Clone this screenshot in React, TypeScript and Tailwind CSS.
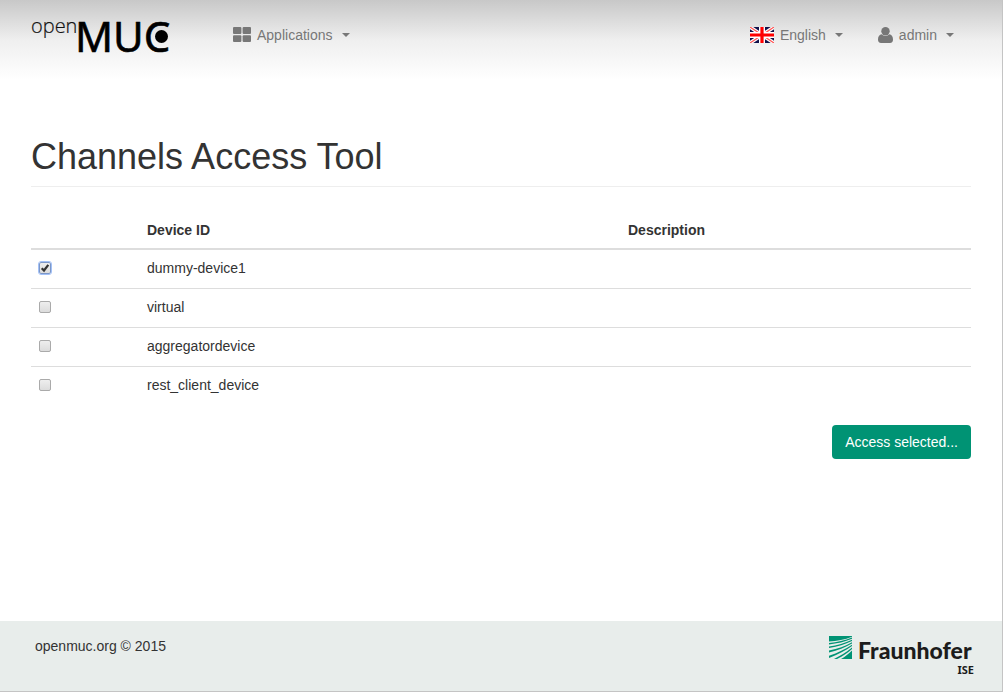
import { useState } from "react";
import type { ReactNode } from "react";

function Caret() {
  return <span className="ml-[9px] inline-block border-x-4 border-t-4 border-x-transparent border-t-[#777]" aria-hidden="true" />;
}

function NavButton({ icon, children }: { icon: ReactNode; children: ReactNode }) {
  return (
    <button type="button" className="flex h-5 items-center text-[#777]">
      {icon}
      <span className="ml-1.5">{children}</span>
      <Caret />
    </button>
  );
}

function TilesIcon() {
  return (
    <svg width="18" height="16" viewBox="0 0 18 16" fill="#777" aria-hidden="true">
      <rect width="8.4" height="7" rx="1" />
      <rect x="9.6" width="8.4" height="7" rx="1" />
      <rect y="8.2" width="8.4" height="6.8" rx="1" />
      <rect x="9.6" y="8.2" width="8.4" height="6.8" rx="1" />
    </svg>
  );
}

function UserIcon() {
  return (
    <svg width="15" height="16" viewBox="0 0 15 16" fill="#777" aria-hidden="true">
      <path d="M0 12.5C0 9.8 1.2 7.5 3.8 7.3C4.8 8.3 6 8.9 7.5 8.9S10.2 8.3 11.2 7.3C13.8 7.5 15 9.8 15 12.5C15 14.6 14 16 12 16H3C1 16 0 14.6 0 12.5Z" />
      <circle cx="7.5" cy="4.2" r="4.2" />
    </svg>
  );
}

function FlagIcon() {
  return (
    <svg width="24" height="16" viewBox="0 0 24 16" aria-hidden="true">
      <rect width="24" height="16" fill="#10104a" />
      <path d="M0 0L24 16M24 0L0 16" stroke="#fff" strokeWidth="3.6" />
      <path d="M0 0L24 16M24 0L0 16" stroke="#f55" strokeWidth="1.2" />
      <path d="M12 0V16M0 8H24" stroke="#fff" strokeWidth="6" />
      <path d="M12 0V16M0 8H24" stroke="#f00" strokeWidth="3.2" />
    </svg>
  );
}

function OpenMucLogo() {
  return (
    <a href="#" aria-label="openMUC">
      <svg width="142" height="68" viewBox="0 0 142 68" aria-hidden="true">
        <text x="0" y="33" fontSize="20" fontWeight="300" fill="#111" stroke="#111" strokeWidth="0.2" className="font-['Open_Sans','Noto_Sans',sans-serif]">open</text>
        <text x="44" y="52" fontSize="42" fill="#000" stroke="#000" strokeWidth="0.6" className="font-['Noto_Sans',sans-serif]">MUC</text>
        <circle cx="130.5" cy="36.5" r="6.5" />
      </svg>
    </a>
  );
}

function FraunhoferLogo() {
  return (
    <svg width="146" height="46" viewBox="0 0 146 46" role="img" aria-label="Fraunhofer ISE">
      <rect y="4" width="23" height="23" fill="#009374" />
      <g fill="#e8edeb">
        <path d="M0 9.6C8 9.2 16 7.6 23 4.8V5.6C16 8.6 8 10.4 0 11Z" />
        <path d="M0 12.4C8 11.6 16 9.8 23 6.8V7.8C16 11.2 8 13.4 0 14.4Z" />
        <path d="M0 16C9 14.6 16 12.400 23 9V10.200C16 14 9 16.800 0 18.600Z" />
        <path d="M0 20.400C9 18.200 16 15.600 23 11.400V12.800C16 17.400 9 20.800 0 23.800Z" />
        <path d="M0 26C9 22.400 17 18.600 23 14V15.600C17 20.400 11 24 5 27H0Z" />
        <path d="M8 27C14 24 19 20.600 23 17V18.400C20 21.600 16 24.600 12 27Z" />
      </g>
      <text x="29" y="27" fontSize="23" fontWeight="900" fill="#1c1c1c" className="font-[Lato,sans-serif]">Fraunhofer</text>
      <text x="145" y="42" textAnchor="end" fontSize="11" fontWeight="700" fill="#1c1c1c" className="font-['Noto_Sans',sans-serif]">ISE</text>
    </svg>
  );
}

const devices = ["dummy-device1", "virtual", "aggregatordevice", "rest_client_device"];

export default function App() {
  const [selected, setSelected] = useState<string[]>(["dummy-device1"]);
  const toggle = (id: string) =>
    setSelected((now) => (now.includes(id) ? now.filter((x) => x !== id) : [...now, id]));

  return (
    <div className="flex min-h-screen flex-col border-r border-b border-[#c4c4c4] bg-white font-['Liberation_Sans',Arial,sans-serif] text-sm leading-5 text-[#333]">
      <header className="flex h-20 items-start bg-linear-to-b from-[#c8c8c8] via-[#efefef] via-50% to-white pr-12 pl-[31px]">
        <OpenMucLogo />
        <nav className="flex flex-1 items-center pt-[25px] pl-[60px]">
          <NavButton icon={<TilesIcon />}>Applications</NavButton>
          <div className="ml-auto flex gap-[35px]">
            <NavButton icon={<FlagIcon />}>English</NavButton>
            <NavButton icon={<UserIcon />}>admin</NavButton>
          </div>
        </nav>
      </header>

      <main className="flex-1 px-[31px] pt-[57px]">
        <h1 className="border-b border-[#eee] pb-[9px] text-4xl leading-10">Channels Access Tool</h1>
        <table className="mt-[25px] w-full table-fixed border-collapse text-left">
          <colgroup>
            <col className="w-[108px]" />
            <col className="w-[481px]" />
            <col />
          </colgroup>
          <thead>
            <tr className="border-b-2 border-[#ddd]">
              <th className="p-2" aria-label="Select" />
              <th className="p-2">Device ID</th>
              <th className="p-2">Description</th>
            </tr>
          </thead>
          <tbody>
            {devices.map((id) => (
              <tr key={id} className="h-[39px] border-b border-[#ddd] last:border-b-0">
                <td className="px-2 pb-0.5">
                  <span className="relative flex size-3">
                    <input
                      id={id}
                      type="checkbox"
                      checked={selected.includes(id)}
                      onChange={() => toggle(id)}
                      className="peer size-3 appearance-none rounded-xs border border-[#aaa] bg-linear-to-b from-[#eee] to-[#dcdcdc] checked:border-[#7c97c8] checked:outline-1 checked:outline-[#a3c1f7]"
                    />
                    <svg viewBox="0 0 12 12" className="pointer-events-none absolute inset-0 hidden size-3 peer-checked:block" aria-hidden="true">
                      <path d="M2.7 6.2L5 8.5L9.3 2.8" fill="none" stroke="#333" strokeWidth="2.2" />
                    </svg>
                  </span>
                </td>
                <td className="px-2 pb-0.5"><label htmlFor={id}>{id}</label></td>
                <td className="px-2 pb-0.5" />
              </tr>
            ))}
          </tbody>
        </table>
        <div className="mt-5 flex justify-end">
          <button type="button" className="rounded-sm bg-[#009374] px-[13px] py-[7px] text-white">Access selected...</button>
        </div>
      </main>

      <footer className="flex h-[70px] items-start justify-between bg-[#e8edeb] pr-[27px] pl-[35px]">
        <p className="pt-[15px]">openmuc.org © 2015</p>
        <div className="pt-[11px]"><FraunhoferLogo /></div>
      </footer>
    </div>
  );
}
